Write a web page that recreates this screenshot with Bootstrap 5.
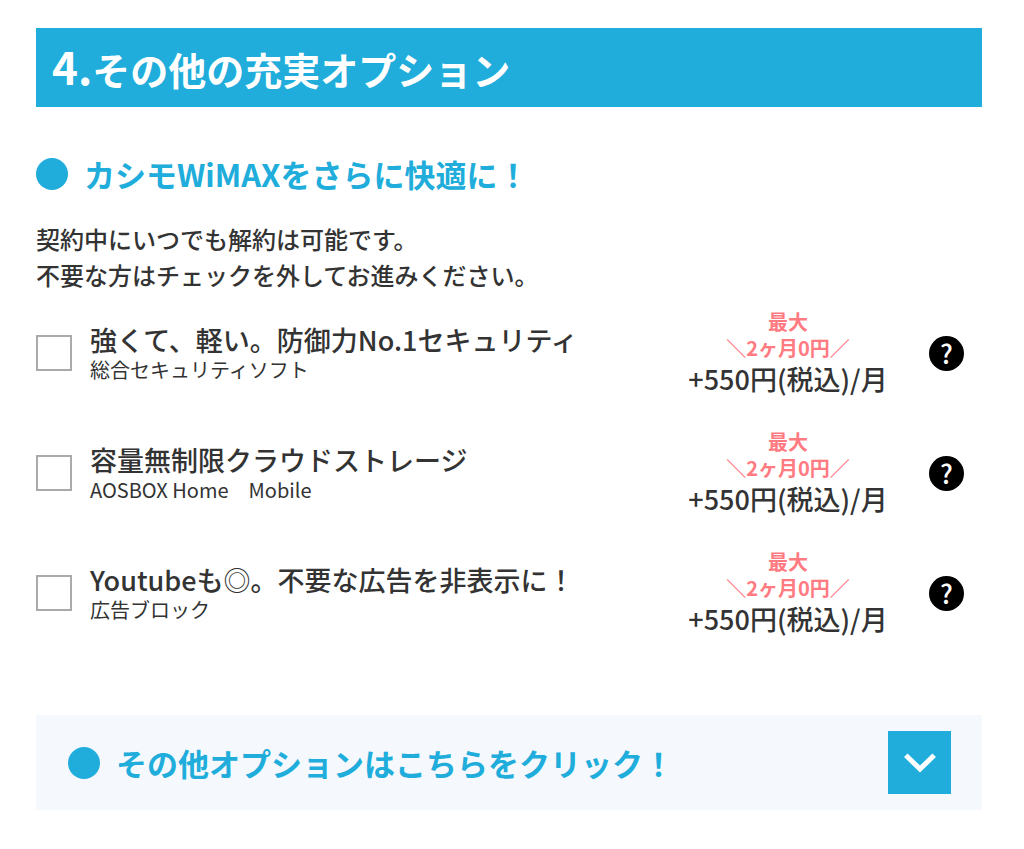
<!DOCTYPE html>
<html lang="ja">
<head>
<meta charset="utf-8">
<meta name="viewport" content="width=device-width, initial-scale=1">
<title>カシモWiMAX オプション</title>
<link href="https://cdn.jsdelivr.net/npm/bootstrap@5.3.0/dist/css/bootstrap.min.css" rel="stylesheet">
<style>
:root { --brand: #20addb; --ink: #333; }
body { font-family: "Noto Sans CJK JP", sans-serif; font-weight: 500; color: var(--ink); background: #fff; }
.page { padding: 28px 42px 40px 36px; }
.step-title { background: var(--brand); color: #fff; font-size: 38px; font-weight: 700; line-height: 76px; padding: 3px 16px 0; margin-bottom: 47px; }
.step-number { font-size: 44px; line-height: 1; }
.brand-title { color: var(--brand); font-size: 31px; font-weight: 700; line-height: 40px; gap: 16px; }
.dot { width: 32px; height: 32px; flex: none; background: var(--brand); border-radius: 50%; }
.intro { font-size: 24px; line-height: 36px; margin: 27px 0 16px; }
.options { gap: 32px; }
.option .form-check-input { width: 36px; height: 36px; margin: 0 18px 0 0; border: 2px solid #aaa; border-radius: 0; flex: none; }
.option label { padding-top: 2px; }
.option-name { font-size: 27px; line-height: 32px; }
.option-note { font-size: 20px; font-weight: 400; line-height: 28px; }
.price { width: 200px; font-size: 27px; line-height: 36px; flex: none; }
.offer { color: #ff7b82; font-size: 20px; font-weight: 700; line-height: 26px; }
.help { margin: 0 18px 0 41px; width: 35px; height: 35px; flex: none; background: #000; color: #fff; font-size: 26px; font-weight: 500; line-height: 34px; }
.more { background: #f5f9fd; padding: 16px 31px 16px 32px; margin-top: 78px; }
.toggle { width: 63px; height: 63px; background: var(--brand); }
</style>
</head>
<body>
<main class="page">
<h1 class="step-title"><span class="step-number">4.</span>その他の充実オプション</h1>
<h2 class="brand-title d-flex align-items-center m-0"><span class="dot"></span>カシモWiMAXをさらに快適に！</h2>
<p class="intro">契約中にいつでも解約は可能です。<br>不要な方はチェックを外してお進みください。</p>
<div class="options d-flex flex-column">
  <div class="option d-flex align-items-center">
    <input class="form-check-input" type="checkbox" id="security">
    <label class="flex-grow-1" for="security"><span class="option-name d-block">強くて、軽い。防御力No.1セキュリティ</span><span class="option-note d-block">総合セキュリティソフト</span></label>
    <div class="price text-center text-nowrap"><div class="offer">最大<br>＼2ヶ月0円／</div>+550円(税込)/月</div>
    <button class="help border-0 rounded-circle p-0" type="button">?</button>
  </div>
  <div class="option d-flex align-items-center">
    <input class="form-check-input" type="checkbox" id="storage">
    <label class="flex-grow-1" for="storage"><span class="option-name d-block">容量無制限クラウドストレージ</span><span class="option-note d-block">AOSBOX Home　Mobile</span></label>
    <div class="price text-center text-nowrap"><div class="offer">最大<br>＼2ヶ月0円／</div>+550円(税込)/月</div>
    <button class="help border-0 rounded-circle p-0" type="button">?</button>
  </div>
  <div class="option d-flex align-items-center">
    <input class="form-check-input" type="checkbox" id="adblock">
    <label class="flex-grow-1" for="adblock"><span class="option-name d-block">Youtubeも<span class="fw-normal">◎</span>。不要な広告を非表示に！</span><span class="option-note d-block">広告ブロック</span></label>
    <div class="price text-center text-nowrap"><div class="offer">最大<br>＼2ヶ月0円／</div>+550円(税込)/月</div>
    <button class="help border-0 rounded-circle p-0" type="button">?</button>
  </div>
</div>
<section class="more d-flex align-items-center justify-content-between">
  <h2 class="brand-title d-flex align-items-center m-0"><span class="dot"></span>その他オプションはこちらをクリック！</h2>
  <button class="toggle d-flex align-items-center justify-content-center border-0 p-0" type="button" aria-label="開く">
    <svg width="32" height="20" viewBox="0 0 32 20" fill="none" stroke="#fff" stroke-width="5"><path d="M1.8 2.3L16 16L30.2 2.3"/></svg>
  </button>
</section>
</main>
<script src="https://cdn.jsdelivr.net/npm/bootstrap@5.3.0/dist/js/bootstrap.bundle.min.js"></script>
</body>
</html>
